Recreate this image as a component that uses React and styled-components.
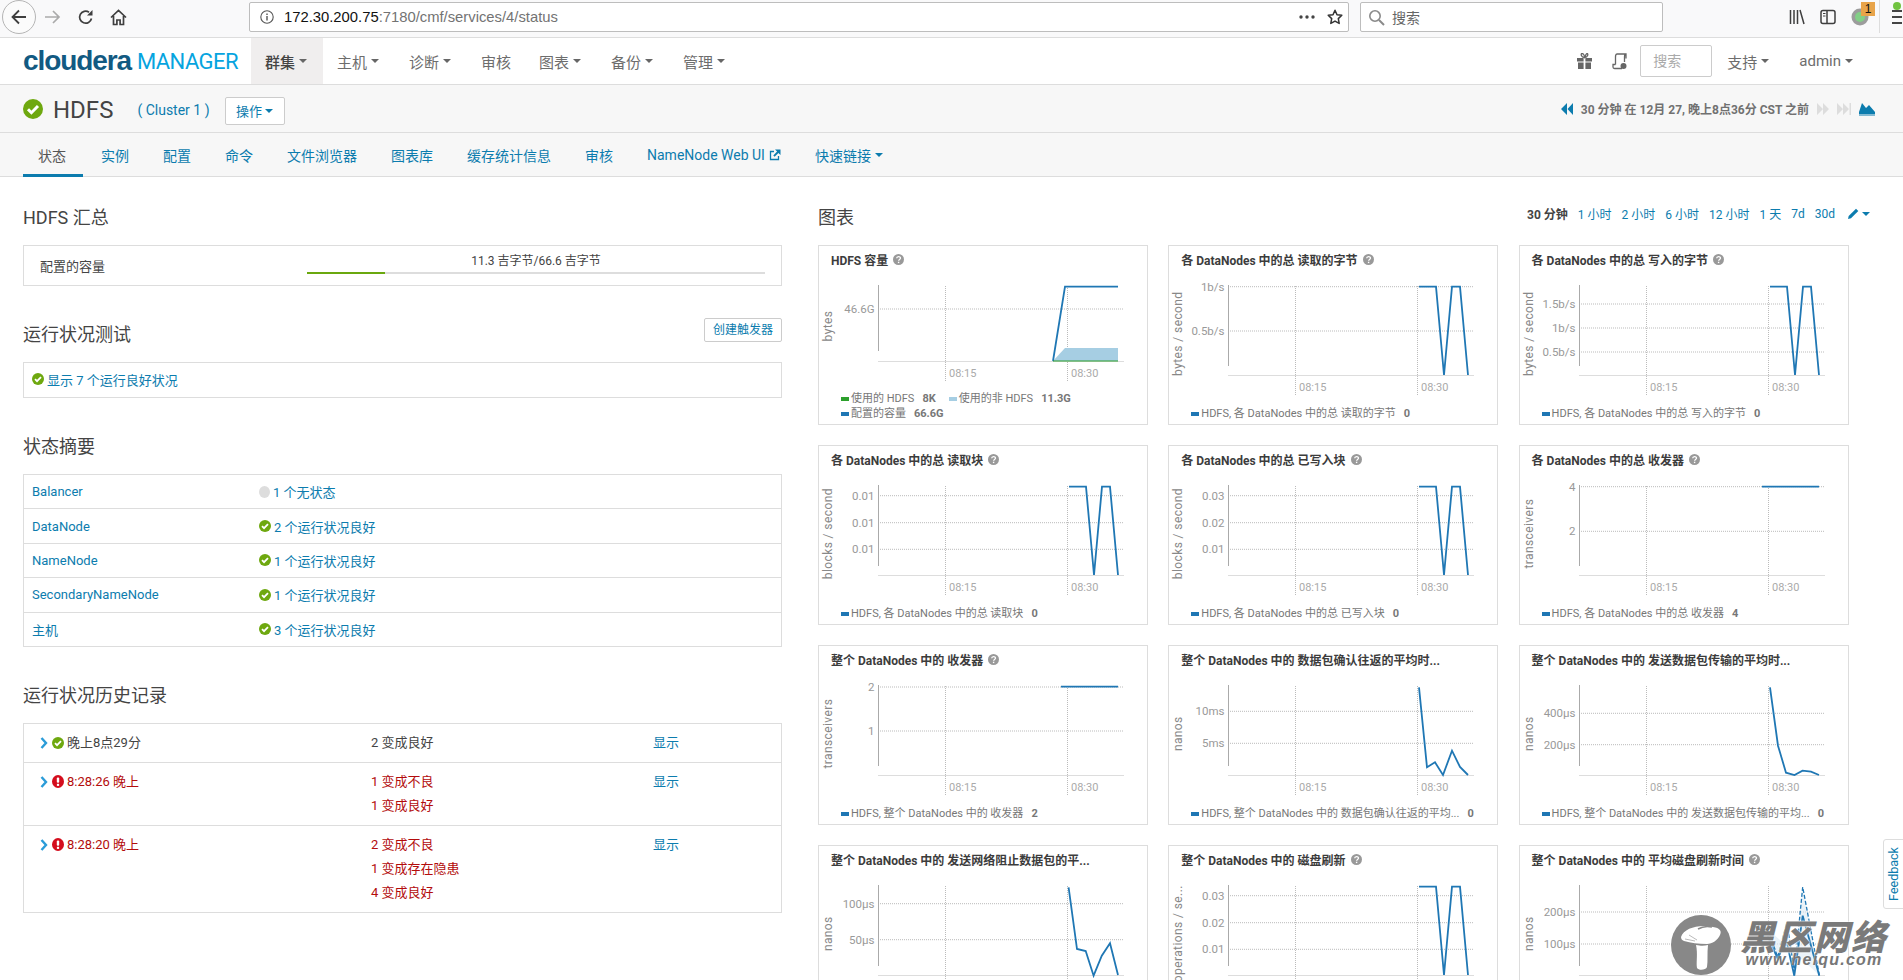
import React from "react";
import styled, { createGlobalStyle } from "styled-components";

const SANS = `Roboto, "Noto Sans CJK SC", sans-serif`;
const LINK = "#0c7cae";

const Global = createGlobalStyle`
  html, body { margin: 0; padding: 0; height: 980px; overflow: hidden; background: #fff; }
  body { font-family: ${SANS}; font-size: 13px; color: #444; position: relative; }
  * { box-sizing: border-box; }
`;

/* ---------- browser chrome ---------- */
const Browser = styled.div`
  height: 38px; background: #f9f9fa; border-bottom: 1px solid #ddd;
  display: flex; align-items: flex-start; padding-left: 2px; overflow: hidden;
`;
const BackBtn = styled.div`
  width: 34px; height: 34px; border-radius: 50%; border: 1px solid #b5b5b5; background: #fbfbfb;
  display: flex; align-items: center; justify-content: center;
`;
const ToolIcon = styled.div`
  width: 33px; height: 34px; display: flex; align-items: center; justify-content: center;
`;
const Field = styled.div`
  height: 30px; margin-top: 2px; background: #fff; border: 1px solid #bdbdbd; border-radius: 2px;
  display: flex; align-items: center; flex: none;
`;
const UrlField = styled(Field)`
  margin-left: 114px; width: 1100px; padding: 0 5px 0 10px;
`;
const SearchField = styled(Field)`
  margin-left: 11px; width: 303px; padding-left: 7px; gap: 7px; font-size: 14px; color: #666;
  font-family: "Liberation Sans", "Noto Sans CJK SC", sans-serif;
`;
const UrlText = styled.div`
  margin-left: 10px; flex: 1; font-size: 14.8px; color: #737373; white-space: nowrap;
  font-family: "Liberation Sans", "Noto Sans CJK SC", sans-serif;
  b { font-weight: 400; color: #111; }
`;
const UrlActions = styled.div`
  display: flex; align-items: center; gap: 12px;
`;
const Addons = styled.div`
  margin-left: 126px; height: 33px; display: flex; align-items: center; gap: 15px; flex: none;
`;
const Badged = styled.div`
  position: relative; width: 18px; height: 18px;
`;
const Badge = styled.span`
  position: absolute; left: 10px; top: -6px; width: 14px; height: 14px; background: #e8a44a;
  font: 12px/14px "Liberation Sans", sans-serif; color: #111; text-align: center;
`;
const Separator = styled.div`
  width: 1px; height: 33px; background: #ddd; margin-left: -5px;
`;
const Burger = styled.div`
  position: relative; width: 10px; margin-left: -3px; display: flex; flex-direction: column; gap: 4px;
  i { display: block; height: 2px; background: #444; }
  &::before { content: ""; position: absolute; left: 1px; top: -8px; width: 8px; height: 8px; border-radius: 50%; background: #71c340; }
`;

/* ---------- top nav ---------- */
const Nav = styled.div`
  background: #fff; border-bottom: 1px solid #ddd; display: flex; align-items: stretch;
  box-sizing: content-box; height: 46px;
`;
const Logo = styled.div`
  width: 251px; flex: none; padding: 0 0 0 23px; display: flex; align-items: center; gap: 6px; white-space: nowrap;
`;
const LogoA = styled.span`
  font: 700 28px/1 "Liberation Sans", sans-serif; color: #125a82; letter-spacing: -1.1px;
`;
const LogoB = styled.span`
  margin-top: 1px; font: 400 22px/1 Roboto, sans-serif; color: #06a4df; letter-spacing: -0.55px;
`;
const NavItem = styled.div`
  display: flex; align-items: center; gap: 4px; padding: 0 14px;
  font-size: 15px; color: ${p => (p.$active ? "#444" : "#6d6d6d")};
  background: ${p => (p.$active ? "#f0eeee" : "transparent")}; white-space: nowrap;
  font-weight: ${p => (p.$active ? 500 : 400)};
`;
const Caret = styled.i`
  display: inline-block; width: 0; height: 0; flex: none;
  border-top: 4px solid ${p => p.$color || "#666"}; border-left: 4px solid transparent; border-right: 4px solid transparent;
`;
const NavCaret = styled(Caret)`
  margin-right: 2px;
`;
const NavRight = styled.div`
  margin-left: auto; display: flex; align-items: center; padding-right: 34px;
`;
const NavSearch = styled.div`
  width: 72px; height: 32px; margin-left: 12px; border: 1px solid #ccc; border-radius: 2px; color: #aaa;
  font-size: 14px; line-height: 30px; padding-left: 12px; margin-right: 1px;
`;

/* ---------- service header ---------- */
const ServiceBar = styled.div`
  height: 48px; background: #f7f7f7; border-bottom: 1px solid #ddd; display: flex; align-items: center;
  padding: 0 28px 0 23px;
`;
const ServiceName = styled.div`
  margin: 2px 0 0 10px; font-size: 24px; color: #444; line-height: 1;
`;
const ClusterLink = styled.a`
  margin: 2px 0 0 24px; font-size: 14px; color: ${LINK}; white-space: pre;
`;
const OpButton = styled.div`
  margin-left: 15px; width: 60px; height: 28px; margin-top: 4px; background: #fff; border: 1px solid #ccc; border-radius: 2px;
  color: ${LINK}; font-size: 13px; display: flex; align-items: center; justify-content: center; gap: 3px;
`;
const TimeCtl = styled.div`
  margin-left: auto; display: flex; align-items: center; gap: 8px; font-size: 12px; font-weight: 700; color: #717171;
`;

/* ---------- tabs ---------- */
const Tabs = styled.div`
  height: 44px; background: #f7f7f7; border-bottom: 1px solid #ddd; display: flex; padding-left: 23px; gap: 4px;
`;
const Tab = styled.div`
  height: 44px; padding: 2px 15px 0; display: flex; align-items: center; gap: 4px; white-space: nowrap;
  font-size: 14px; color: ${LINK}; border-bottom: 3px solid transparent;
`;
const ActiveTab = styled(Tab)`
  padding: 2px 16px 0 15px; margin-right: -1px; width: 60px; color: #555; border-bottom-color: ${LINK};
`;

/* ---------- main ---------- */
const Main = styled.div`
  display: grid; grid-template-columns: 759px 1fr; column-gap: 36px; padding: 24px 33px 0 23px;
`;
const Section = styled.section`
  margin-top: ${p => (p.$first ? 0 : 32)}px;
`;
const HeadRow = styled.div`
  display: flex; justify-content: space-between; align-items: flex-start; height: 28px; margin-bottom: 16px;
`;
const Heading = styled.h3`
  margin: 5px 0 0; font-size: 18px; font-weight: 400; line-height: 23px; color: #444;
`;
const TriggerBtn = styled.div`
  height: 24px; width: 78px; text-align: center; line-height: 22px; background: #fff; border: 1px solid #ccc; border-radius: 2px;
  font-size: 12px; color: ${LINK};
`;
const Box = styled.div`
  border: 1px solid #ddd; background: #fff;
`;
const CapacityBox = styled(Box)`
  height: 41px; display: flex; align-items: center; padding: 0 16px 1px 16px; font-size: 13px;
`;
const CapacityName = styled.div`
  width: 267px; color: #444; flex: none;
`;
const Capacity = styled.div`
  flex: 1; position: relative; height: 20px; text-align: center; font-size: 12px; line-height: 15px; margin-top: -2px; color: #444;
`;
const Track = styled.div`
  position: absolute; left: 0; right: 0; bottom: 0; height: 2px; background: #ddd;
`;
const Fill = styled.div`
  height: 100%; background: #6aa80e;
`;
const HealthBox = styled(Box)`
  height: 36px; display: flex; align-items: center; gap: 3px; padding: 0 0 2px 8px; font-size: 13px; color: ${LINK};
`;
const StatusRow = styled.div`
  height: 33.4px; display: flex; align-items: center; font-size: 13px;
  & + & { box-sizing: content-box; border-top: 1px solid #ddd; }
`;
const StatusName = styled.a`
  width: 235px; padding-left: 8px; color: ${LINK}; flex: none;
`;
const StatusVal = styled.div`
  display: flex; align-items: center; gap: 3px; color: ${LINK};
`;
const GrayDot = styled.i`
  width: 11px; height: 12px; border-radius: 50%; background: #ddd; display: block;
`;
const HistRow = styled.div`
  display: grid; grid-template-columns: 331px 282px 1fr; padding: 7px 0 7px 16px; line-height: 24px; font-size: 13px;
  color: ${p => (p.$bad ? "#b30c0c" : "#444")};
  & + & { box-sizing: content-box; border-top: 1px solid #ddd; }
`;
const HistTime = styled.div`
  display: flex; align-items: center; height: 24px; gap: 3px;
`;
const Show = styled.a`
  color: ${LINK};
`;

/* ---------- charts ---------- */
const ChartsHead = styled.div`
  display: flex; justify-content: space-between; align-items: flex-start; height: 28px; margin-bottom: 16px;
`;
const Ranges = styled.div`
  display: flex; align-items: center; gap: 10px; font-size: 12px; color: ${LINK}; margin-top: 4px; white-space: nowrap;
  b { color: #444; font-weight: 700; }
`;
const PencilGroup = styled.span`
  display: flex; align-items: center; gap: 3px; margin-left: 3px;
`;
const Grid = styled.div`
  display: grid; grid-template-columns: repeat(3, 330px); gap: 20px 20.3px;
`;
const Card = styled.div`
  height: 180px; border: 1px solid #ddd; background: #fff; display: flex; flex-direction: column; padding-top: 2px;
`;
const CardTitle = styled.div`
  height: 22px; margin-bottom: 5px; padding-left: 12px; display: flex; align-items: center; gap: 5px; font-size: 12px; font-weight: 700; color: #3c3c3c; white-space: nowrap;
`;
const Plot = styled.svg`
  display: block; flex: none;
  text { font-family: Roboto, sans-serif; font-size: 11.5px; fill: #999; }
  .ytitle { font-size: 12px; letter-spacing: .4px; fill: #888; }
  .xt { font-size: 11px; fill: #aaa; }
`;
const Legend = styled.div`
  margin-top: auto; padding: 0 0 3px 22px; font-size: 11px; line-height: 15px; color: #777; white-space: nowrap;
`;
const LegendRow = styled.div`
  display: flex; align-items: center; gap: 13px;
`;
const LegendItem = styled.span`
  display: flex; align-items: center; gap: 2px;
  b { margin-left: 6px; font-weight: 700; }
`;
const Swatch = styled.i`
  display: block; width: 8px; height: 4px; background: ${p => p.$c};
`;

/* ---------- overlays ---------- */
const FeedbackTab = styled.div`
  position: absolute; left: 1883px; top: 839px; width: 22px; height: 70px; background: #fff; border: 1px solid #ddd;
  border-radius: 3px 0 0 3px; color: ${LINK}; font: 12.5px/20px Roboto, sans-serif;
  display: flex; align-items: center; justify-content: center;
  span { transform: rotate(-90deg); display: block; }
`;
const Watermark = styled.div`
  position: absolute; left: 1671px; top: 915px; display: flex; align-items: flex-start; gap: 8px; pointer-events: none;
`;
const WmText = styled.div`
  display: flex; flex-direction: column; align-items: center; margin-top: 3px; width: 150px;
`;
const WmBig = styled.div`
  height: 34px; font: italic 900 35px/34px "Noto Sans CJK SC", sans-serif; color: #7a7a7a; letter-spacing: 2px; white-space: nowrap;
  text-shadow: 0 0 2px #fff, 0 0 2px #fff;
`;
const WmSmall = styled.div`
  font: italic 700 16px/16px "Liberation Sans", sans-serif; color: #777; letter-spacing: 1.2px; white-space: nowrap;
  text-shadow: 0 0 2px #fff;
`;

/* ---------- icons ---------- */
const Check = ({ size = 12 }) => (
  <svg width={size} height={size} viewBox="0 0 20 20" style={{ flex: "none" }}>
    <circle cx="10" cy="10" r="10" fill="#6ea80f" />
    <path d="M5 10.3l3.4 3.4L15 7" fill="none" stroke="#fff" strokeWidth="3" />
  </svg>
);
const Err = () => (
  <svg width="12" height="13" viewBox="0 0 12 13" style={{ flex: "none" }}>
    <ellipse cx="6" cy="6.5" rx="6" ry="6.5" fill="#d40d1d" />
    <rect x="4.8" y="2.4" width="2.4" height="5.4" rx="1" fill="#fff" />
    <rect x="4.9" y="8.8" width="2.2" height="2.1" fill="#fff" />
  </svg>
);
const Chevron = () => (
  <svg width="8" height="12" viewBox="0 0 8 12" style={{ flex: "none", marginRight: 1 }}>
    <path d="M1.5 1l4.5 5-4.5 5" fill="none" stroke="#2b9cd8" strokeWidth="2.4" />
  </svg>
);
const Help = () => (
  <svg width="11" height="11" viewBox="0 0 11 11" style={{ flex: "none" }}>
    <circle cx="5.5" cy="5.5" r="5.5" fill="#999" />
    <path d="M3.7 4.3c0-2.3 3.8-2.3 3.8-.2 0 1.4-1.9 1.3-1.9 2.7" fill="none" stroke="#fff" strokeWidth="1.3" />
    <rect x="4.9" y="7.7" width="1.4" height="1.4" fill="#fff" />
  </svg>
);
const Ext = () => (
  <svg width="12" height="12" viewBox="0 0 12 12">
    <path d="M9.5 7v3.5h-8v-8H5" fill="none" stroke={LINK} strokeWidth="1.3" />
    <path d="M6 0.5h5.5V6L9.4 3.9 5.6 7.7 4.3 6.4 8.1 2.6z" fill={LINK} />
  </svg>
);

const Gray = "#3f3f3f";
const BackIcon = () => (
  <svg width="18" height="18" viewBox="0 0 18 18"><path d="M16 9H3M9 2.5L2.5 9 9 15.5" fill="none" stroke={Gray} strokeWidth="1.8" /></svg>
);
const ForwardIcon = () => (
  <svg width="17" height="16" viewBox="0 0 17 16"><path d="M1 8h14M9 2l6 6-6 6" fill="none" stroke="#aaa" strokeWidth="1.7" /></svg>
);
const ReloadIcon = () => (
  <svg width="16" height="16" viewBox="0 0 16 16"><path d="M13.5 9.5A6 6 0 1 1 11 3.2" fill="none" stroke={Gray} strokeWidth="1.7" /><path d="M14.5 1v5.5H9z" fill={Gray} /></svg>
);
const HomeIcon = () => (
  <svg width="17" height="17" viewBox="0 0 17 17"><path d="M1 8.5L8.5 1.5 16 8.5M3.5 7v8.5h3.4V11h3.2v4.5h3.4V7" fill="none" stroke={Gray} strokeWidth="1.7" /></svg>
);
const InfoIcon = () => (
  <svg width="14" height="14" viewBox="0 0 14 14"><circle cx="7" cy="7" r="6.2" fill="none" stroke="#555" strokeWidth="1.1" /><rect x="6.3" y="6" width="1.4" height="4.5" fill="#555" /><rect x="6.3" y="3.5" width="1.4" height="1.5" fill="#555" /></svg>
);
const DotsIcon = () => (
  <svg width="16" height="4" viewBox="0 0 16 4"><circle cx="2" cy="2" r="1.7" fill="#444" /><circle cx="8" cy="2" r="1.7" fill="#444" /><circle cx="14" cy="2" r="1.7" fill="#444" /></svg>
);
const StarIcon = () => (
  <svg width="16" height="16" viewBox="0 0 16 16"><path d="M8 1.3l2 4.4 4.8.6-3.5 3.3.9 4.8L8 12.1l-4.200 2.3.9-4.800L1.200 6.300 6 5.700z" fill="none" stroke="#333" strokeWidth="1.5" strokeLinejoin="round" /></svg>
);
const SearchIcon = () => (
  <svg width="17" height="17" viewBox="0 0 17 17"><circle cx="7" cy="7" r="5.2" fill="none" stroke="#8a8a8a" strokeWidth="1.6" /><path d="M11 11l5 5" stroke="#8a8a8a" strokeWidth="2" /></svg>
);
const LibraryIcon = () => (
  <svg width="16" height="16" viewBox="0 0 16 16"><path d="M1.500 1v14M5 1v14M8.500 1v14M11 1l4 14" stroke="#3f3f3f" strokeWidth="1.500" fill="none" /></svg>
);
const SidebarIcon = () => (
  <svg width="16" height="16" viewBox="0 0 16 16"><rect x="1" y="1.500" width="14" height="13" rx="2" fill="none" stroke="#3f3f3f" strokeWidth="1.500" /><path d="M7 2v12" stroke="#3f3f3f" strokeWidth="1.500" /><path d="M3 4.500h2.500M3 7h2.500" stroke="#3f3f3f" /></svg>
);
const AddonIcon = () => (
  <svg width="18" height="18" viewBox="0 0 18 18"><circle cx="9" cy="9" r="8.500" fill="#9c9c9c" /><circle cx="9" cy="9" r="5" fill="#82cf86" /></svg>
);
const GiftIcon = () => (
  <svg width="15" height="16" viewBox="0 0 15 16"><path d="M0 5h6.600v3.500H0zM8.400 5H15v3.500H8.400zM1 9.500h5.600V16H1zM8.400 9.500H14V16H8.400z" fill="#666" /><path d="M7.500 4.500C4 4.500 3.500 .5 5 .5s2.500 2.200 2.500 4 1-4 2.500-4 1 4-2.500 4z" fill="none" stroke="#666" strokeWidth="1.300" /></svg>
);
const ScrollIcon = () => (
  <svg width="16" height="17" viewBox="0 0 16 17" style={{ marginLeft: 20 }}><path d="M5 1h9v4.500M5 1c-1.500 0-1.500 2-1.500 3v7.500M14 1c-1.500 0-1.500 1-1.500 3v5M3.500 11.500H1V14c0 1 .8 1.500 1.500 1.500H10" fill="none" stroke="#666" strokeWidth="1.300" /><circle cx="11.500" cy="13" r="3" fill="#666" /></svg>
);
const Tri = ({ dir, c, n = 2 }) => (
  <svg width={n === 3 ? 14 : 12} height="14" viewBox={`0 0 ${n === 3 ? 14 : 12} 14`} style={{ flex: "none" }}>
    {dir === "l" ? (
      <path d="M6 1L0 7l6 6zM12 1L6.500 7l5.500 6z" fill={c} />
    ) : n === 3 ? (
      <path d="M0 1l6 6-6 6zM6 1l6 6-6 6zM12.500 1H14v12h-1.500z" fill={c} />
    ) : (
      <path d="M0 1l6 6-6 6zM6 1l6 6-6 6z" fill={c} />
    )}
  </svg>
);
const AreaIcon = () => (
  <svg width="16" height="14" viewBox="0 0 16 14" style={{ flex: "none" }}><path d="M0 10L3 1l4 5 3-3 6 7v2H0z" fill={LINK} /><path d="M0 13h16" stroke={LINK} /></svg>
);
const PencilIcon = () => (
  <svg width="11" height="11" viewBox="0 0 11 11"><path d="M0 11l.7-3L8 .7 10.300 3 3 10.300z" fill={LINK} /></svg>
);
const Mushroom = () => (
  <svg width="60" height="60" viewBox="0 0 60 60" style={{ flex: "none" }}>
    <circle cx="30" cy="30" r="30" fill="#888" />
    <path d="M10 22c3-9 18-13 32-10 7 1 9 4 7 8-2 5-8 9-13 9-9 0-16-1-23-3-2-1-3-2-3-4z" fill="#fff" />
    <path d="M25 30c5 1 8 1 12 0-1 8 0 16-1 22-1 3-8 4-10 1-1-6 1-14-1-23z" fill="#fff" />
    <path d="M27 14c5-3 10-3 14-2" stroke="#888" strokeWidth="1.500" fill="none" />
    <path d="M14 24l10 2M18 20l8 5" stroke="#bbb" strokeWidth="1" />
  </svg>
);

/* ---------- chart data ---------- */
const BLUE = "#1f77b4";
const WAVE = [[251, 41.7], [268, 41.7], [276, 130], [284, 41.7], [292, 41.7], [300, 130]];
const FLAT = [[243, 41.7], [300, 41.7]];

const cards = [
  {
    title: "HDFS 容量", help: true, short: true, y: "bytes", yc: 81, ticks: [["46.6G", 64]],
    area: "235,116 247,103 300,103 300,116", green: [[235, 116], [300, 116]],
    series: [[235, 116], [247, 41.7], [300, 41.7]],
    legend: [[["#2ca02c", "使用的 HDFS", "8K"], ["#a6cee3", "使用的非 HDFS", "11.3G"]], [[BLUE, "配置的容量", "66.6G"]]],
  },
  {
    title: "各 DataNodes 中的总 读取的字节", help: true, y: "bytes / second",
    ticks: [["1b/s", 41.7], ["0.5b/s", 86]], series: WAVE, legend: [[[BLUE, "HDFS, 各 DataNodes 中的总 读取的字节", "0"]]],
  },
  {
    title: "各 DataNodes 中的总 写入的字节", help: true, y: "bytes / second",
    ticks: [["1.5b/s", 59], ["1b/s", 83], ["0.5b/s", 107]], series: WAVE, legend: [[[BLUE, "HDFS, 各 DataNodes 中的总 写入的字节", "0"]]],
  },
  {
    title: "各 DataNodes 中的总 读取块", help: true, y: "blocks / second",
    ticks: [["0.01", 50.7], ["0.01", 77.7], ["0.01", 104.3]], series: WAVE, legend: [[[BLUE, "HDFS, 各 DataNodes 中的总 读取块", "0"]]],
  },
  {
    title: "各 DataNodes 中的总 已写入块", help: true, y: "blocks / second",
    ticks: [["0.03", 50.7], ["0.02", 77.7], ["0.01", 104.3]], series: WAVE, legend: [[[BLUE, "HDFS, 各 DataNodes 中的总 已写入块", "0"]]],
  },
  {
    title: "各 DataNodes 中的总 收发器", help: true, y: "transceivers",
    ticks: [["4", 41.7], ["2", 86.3]], series: FLAT, legend: [[[BLUE, "HDFS, 各 DataNodes 中的总 收发器", "4"]]],
  },
  {
    title: "整个 DataNodes 中的 收发器", help: true, y: "transceivers",
    ticks: [["2", 42], ["1", 86]], series: FLAT, legend: [[[BLUE, "HDFS, 整个 DataNodes 中的 收发器", "2"]]],
  },
  {
    title: "整个 DataNodes 中的 数据包确认往返的平均时...", y: "nanos",
    ticks: [["10ms", 66.3], ["5ms", 98.3]],
    series: [[251, 42.3], [259, 122.3], [267, 117.3], [275, 130], [284, 105.7], [292, 122], [300, 130]],
    legend: [[[BLUE, "HDFS, 整个 DataNodes 中的 数据包确认往返的平均...", "0"]]],
  },
  {
    title: "整个 DataNodes 中的 发送数据包传输的平均时...", y: "nanos",
    ticks: [["400μs", 68.3], ["200μs", 99.7]],
    series: [[251, 42.3], [259, 100.7], [267, 127.7], [275.500, 130], [283.500, 125.7], [292, 126.7], [300, 130]],
    legend: [[[BLUE, "HDFS, 整个 DataNodes 中的 发送数据包传输的平均...", "0"]]],
  },
  {
    title: "整个 DataNodes 中的 发送网络阻止数据包的平...", y: "nanos", fold: true,
    ticks: [["100μs", 58.7], ["50μs", 94.7]],
    series: [[250.6, 42.3], [259, 104], [267.7, 106], [275.6, 130.7], [283.8, 110.7], [292, 98.3], [300, 130]],
  },
  {
    title: "整个 DataNodes 中的 磁盘刷新", help: true, y: "operations / se...", fold: true,
    ticks: [["0.03", 50.7], ["0.02", 77.7], ["0.01", 104.3]], series: WAVE,
  },
  {
    title: "整个 DataNodes 中的 平均磁盘刷新时间", help: true, y: "nanos", fold: true,
    ticks: [["200μs", 67], ["100μs", 99]],
    series: [[248.7, 90.7], [258.7, 114], [267, 94], [275.3, 130.7], [283.7, 70.7], [300.3, 130.7]],
    dashed: [[248.7, 84], [258.7, 112], [268, 77], [275.3, 127], [283.7, 42], [300.3, 130]],
  },
];

const pts = a => a.map(p => p.join(",")).join(" ");

const Chart = ({ c }) => {
  const base = c.short ? 116 : 130;
  const axisEnd = c.short ? 106 : 121;
  const vEnd = c.short ? 136 : 151;
  const h = c.short ? 110 : 124;
  return (
    <Plot width="328" height={h} viewBox={`1 30 328 ${h}`}>
      {c.ticks.map(([l, y], i) => (
        <g key={i}>
          <line x1="60" x2="306" y1={y} y2={y} stroke="#bbb" strokeDasharray="1 1" />
          <text x="56.500" y={y + 4} textAnchor="end">{l}</text>
        </g>
      ))}
      {[127.500, 249.500].map(x => (
        <line key={x} x1={x} x2={x} y1="41" y2={vEnd} stroke="#bbb" strokeDasharray="1 1" />
      ))}
      <line x1="60.500" x2="60.500" y1="40" y2={axisEnd} stroke="#aaa" />
      <line x1="60" x2="306" y1={base + 0.5} y2={base + 0.5} stroke="#ddd" />
      {!c.fold && <text className="xt" x="131" y={base + 16}>08:15</text>}
      {!c.fold && <text className="xt" x="253" y={base + 16}>08:30</text>}
      <text className="ytitle" transform={`translate(14 ${c.yc || 88.700}) rotate(-90)`} textAnchor="middle">{c.y}</text>
      {c.area && <polygon points={c.area} fill="#a6cee3" />}
      {c.dashed && <polyline points={pts(c.dashed)} fill="#dceaf4" fillOpacity=".6" stroke={BLUE} strokeWidth="1.300" strokeDasharray="4 2" />}
      <polyline points={pts(c.series)} fill="none" stroke={BLUE} strokeWidth="1.800" />
      {c.green && <polyline points={pts(c.green)} fill="none" stroke="#2ca02c" strokeWidth="1" />}
    </Plot>
  );
};

const ChartCard = ({ c }) => (
  <Card>
    <CardTitle>{c.title}{c.help && <Help />}</CardTitle>
    <Chart c={c} />
    {c.legend && (
      <Legend>
        {c.legend.map((row, i) => (
          <LegendRow key={i}>
            {row.map(([col, label, val]) => (
              <LegendItem key={label}><Swatch $c={col} />{label}<b>{val}</b></LegendItem>
            ))}
          </LegendRow>
        ))}
      </Legend>
    )}
  </Card>
);

const navItems = [["群集", 1, 1], ["主机", 1], ["诊断", 1], ["审核", 0], ["图表", 1], ["备份", 1], ["管理", 1]];
const tabs = ["实例", "配置", "命令", "文件浏览器", "图表库", "缓存统计信息", "审核"];
const statuses = [
  ["Balancer", "1 个无状态", true],
  ["DataNode", "2 个运行状况良好"],
  ["NameNode", "1 个运行状况良好"],
  ["SecondaryNameNode", "1 个运行状况良好"],
  ["主机", "3 个运行状况良好"],
];
const history = [
  { time: "晚上8点29分", lines: ["2 变成良好"] },
  { time: "8:28:26 晚上", bad: true, lines: ["1 变成不良", "1 变成良好"] },
  { time: "8:28:20 晚上", bad: true, lines: ["2 变成不良", "1 变成存在隐患", "4 变成良好"] },
];
const ranges = ["1 小时", "2 小时", "6 小时", "12 小时", "1 天", "7d", "30d"];

export default function App() {
  return (
    <>
      <Global />
      <Browser>
        <BackBtn><BackIcon /></BackBtn>
        <ToolIcon><ForwardIcon /></ToolIcon>
        <ToolIcon><ReloadIcon /></ToolIcon>
        <ToolIcon><HomeIcon /></ToolIcon>
        <UrlField>
          <InfoIcon />
          <UrlText><b>172.30.200.75</b>:7180/cmf/services/4/status</UrlText>
          <UrlActions><DotsIcon /><StarIcon /></UrlActions>
        </UrlField>
        <SearchField><SearchIcon />搜索</SearchField>
        <Addons>
          <LibraryIcon />
          <SidebarIcon />
          <Badged><AddonIcon /><Badge>1</Badge></Badged>
          <Separator />
          <Burger><i /><i /><i /></Burger>
        </Addons>
      </Browser>

      <Nav>
        <Logo><LogoA>cloudera</LogoA><LogoB>MANAGER</LogoB></Logo>
        {navItems.map(([t, caret, active]) => (
          <NavItem key={t} $active={active}>{t}{caret ? <NavCaret /> : null}</NavItem>
        ))}
        <NavRight>
          <GiftIcon />
          <ScrollIcon />
          <NavSearch>搜索</NavSearch>
          <NavItem>支持<NavCaret /></NavItem>
          <NavItem>admin<NavCaret /></NavItem>
        </NavRight>
      </Nav>

      <ServiceBar>
        <Check size={20} />
        <ServiceName>HDFS</ServiceName>
        <ClusterLink>( Cluster 1 )</ClusterLink>
        <OpButton>操作<Caret $color={LINK} /></OpButton>
        <TimeCtl>
          <Tri dir="l" c={LINK} />
          <span>30 分钟 在 12月 27, 晚上8点36分 CST 之前</span>
          <Tri dir="r" c="#ddd" />
          <Tri dir="r" c="#ddd" n={3} />
          <AreaIcon />
        </TimeCtl>
      </ServiceBar>

      <Tabs>
        <ActiveTab>状态</ActiveTab>
        {tabs.map((t, i) => <Tab key={i}>{t}</Tab>)}
        <Tab>NameNode Web UI<Ext /></Tab>
        <Tab>快速链接<Caret $color={LINK} /></Tab>
      </Tabs>

      <Main>
        <div>
          <Section $first>
            <HeadRow><Heading>HDFS 汇总</Heading></HeadRow>
            <CapacityBox>
              <CapacityName>配置的容量</CapacityName>
              <Capacity>11.3 吉字节/66.6 吉字节<Track><Fill style={{ width: "17%" }} /></Track></Capacity>
            </CapacityBox>
          </Section>
          <Section>
            <HeadRow><Heading>运行状况测试</Heading><TriggerBtn>创建触发器</TriggerBtn></HeadRow>
            <HealthBox><Check />显示 7 个运行良好状况</HealthBox>
          </Section>
          <Section>
            <HeadRow><Heading>状态摘要</Heading></HeadRow>
            <Box>
              {statuses.map(([n, v, gray]) => (
                <StatusRow key={n}>
                  <StatusName>{n}</StatusName>
                  <StatusVal>{gray ? <GrayDot /> : <Check />}{v}</StatusVal>
                </StatusRow>
              ))}
            </Box>
          </Section>
          <Section>
            <HeadRow><Heading>运行状况历史记录</Heading></HeadRow>
            <Box>
              {history.map(h => (
                <HistRow key={h.time} $bad={h.bad}>
                  <HistTime><Chevron />{h.bad ? <Err /> : <Check />}{h.time}</HistTime>
                  <div>{h.lines.map(l => <div key={l}>{l}</div>)}</div>
                  <div><Show>显示</Show></div>
                </HistRow>
              ))}
            </Box>
          </Section>
        </div>
        <div>
          <ChartsHead>
            <Heading>图表</Heading>
            <Ranges>
              <b>30 分钟</b>
              {ranges.map(r => <span key={r}>{r}</span>)}
              <PencilGroup><PencilIcon /><Caret $color={LINK} /></PencilGroup>
            </Ranges>
          </ChartsHead>
          <Grid>
            {cards.map(c => <ChartCard key={c.title} c={c} />)}
          </Grid>
        </div>
      </Main>

      <FeedbackTab><span>Feedback</span></FeedbackTab>
      <Watermark>
        <Mushroom />
        <WmText>
          <WmBig>黑区网络</WmBig>
          <WmSmall>www.heiqu.com</WmSmall>
        </WmText>
      </Watermark>
    </>
  );
}
